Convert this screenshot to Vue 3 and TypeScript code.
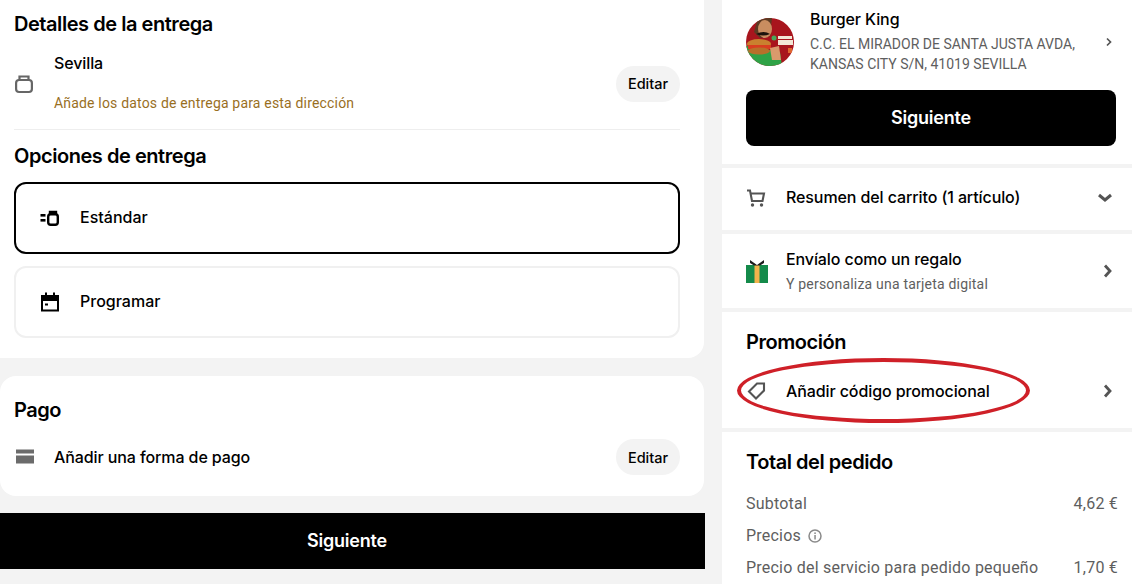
<script setup lang="ts">
const totals = [
  { label: 'Subtotal', value: '4,62 €', info: false },
  { label: 'Precios', value: '', info: true },
  { label: 'Precio del servicio para pedido pequeño', value: '1,70 €', info: false },
];
</script>

<template>
  <div class="page">
    <main class="left">
      <section class="card delivery">
        <h2 class="title">Detalles de la entrega</h2>
        <div class="address">
          <svg class="addr-icon" width="20" height="20" viewBox="0 0 20 20">
            <path d="M5.500 7V2.500h9V7" fill="none" stroke="#666" stroke-width="2.200" />
            <rect x="2.100" y="6" width="15.800" height="12" rx="3" fill="none" stroke="#666" stroke-width="2.200" />
          </svg>
          <div class="addr-text">
            <div class="addr-city">Sevilla</div>
            <div class="addr-warn">Añade los datos de entrega para esta dirección</div>
          </div>
          <button class="edit">Editar</button>
        </div>
        <div class="rule"></div>
        <h2 class="title options">Opciones de entrega</h2>
        <div class="option selected">
          <svg width="20" height="20" viewBox="0 0 20 20">
            <rect x="0.500" y="6" width="5" height="2.600" fill="#000" />
            <rect x="0.500" y="11" width="5" height="2.600" fill="#000" />
            <path d="M10 6V4h6v2" fill="none" stroke="#000" stroke-width="2.400" />
            <rect x="8.200" y="6.200" width="9.600" height="10.600" rx="2.500" fill="none" stroke="#000" stroke-width="2.400" />
          </svg>
          <span class="option-label">Estándar</span>
        </div>
        <div class="option">
          <svg width="20" height="20" viewBox="0 0 20 20">
            <path d="M1 3h4V0.500h2V3h6V0.500h2V3h4v16.500H1V3Zm2 6v8.500h14V9H3Z" fill="#000" />
            <rect x="5" y="11.500" width="3" height="2" fill="#000" />
          </svg>
          <span class="option-label">Programar</span>
        </div>
      </section>

      <section class="card payment">
        <h2 class="title">Pago</h2>
        <div class="pay-row">
          <svg class="addr-icon" width="20" height="20" viewBox="0 0 20 20">
            <rect x="2" y="2.500" width="18" height="4" fill="#6b6b6b" />
            <rect x="2" y="8.500" width="18" height="8" fill="#6b6b6b" />
          </svg>
          <span class="pay-label">Añadir una forma de pago</span>
          <button class="edit">Editar</button>
        </div>
      </section>

      <button class="next wide">Siguiente</button>
    </main>

    <aside class="right">
      <section class="panel store">
        <div class="store-row">
          <svg class="logo" width="48" height="48" viewBox="0 0 48 48">
            <defs>
              <clipPath id="logo-clip"><circle cx="24" cy="24" r="24" /></clipPath>
            </defs>
            <g clip-path="url(#logo-clip)">
              <rect width="48" height="48" fill="#a8151d" />
              <path d="M0 28 L14 30 L34 34 L36 48 H0Z" fill="#2fa347" />
              <path d="M12 0 H26 L24 18 L14 20 L8 14Z" fill="#5c3a22" />
              <ellipse cx="19" cy="11" rx="7" ry="9" fill="#c98d60" />
              <path d="M10 16 q8 -4 14 0 q-7 3 -14 0Z" fill="#1c120c" />
              <ellipse cx="13" cy="26" rx="12" ry="5" fill="#c9802f" />
              <rect x="2" y="27" width="23" height="4" fill="#d93d20" />
              <ellipse cx="13" cy="33" rx="11" ry="3.500" fill="#b8702a" />
              <path d="M24 30 L33 28 L35 42 L26 42Z" fill="#d99a6c" />
              <circle cx="28" cy="20" r="2.500" fill="#49a85a" />
              <rect x="32" y="18" width="14" height="3" fill="#f3e7d6" />
              <rect x="32" y="22" width="15" height="5" fill="#f3e7d6" />
              <rect x="42" y="30" width="4" height="5" fill="#e0662e" />
            </g>
          </svg>
          <div class="store-text">
            <div class="store-name">Burger King</div>
            <div class="store-addr">C.C. EL MIRADOR DE SANTA JUSTA AVDA,<br />KANSAS CITY S/N, 41019 SEVILLA</div>
          </div>
          <svg class="store-chev" width="8" height="10" viewBox="0 0 8 10">
            <path d="M2 1.500 5.500 5 2 8.500" fill="none" stroke="#545454" stroke-width="1.700" />
          </svg>
        </div>
        <button class="next side">Siguiente</button>
      </section>

      <section class="panel cart">
        <svg width="20" height="20" viewBox="0 0 20 20">
          <path d="M1 2.500h3l2 10.500h10.500l1.500-7.500H4.600" fill="none" stroke="#545454" stroke-width="2.100" />
          <circle cx="6.500" cy="17" r="1.700" fill="#545454" />
          <circle cx="15.500" cy="17" r="1.700" fill="#545454" />
        </svg>
        <span class="row-label">Resumen del carrito (1 artículo)</span>
        <svg class="chev down" width="16" height="16" viewBox="0 0 16 16">
          <path d="M2 5l6 5 6-5" fill="none" stroke="#545454" stroke-width="3" />
        </svg>
      </section>

      <section class="panel gift">
        <svg width="22" height="24" viewBox="0 0 22 24">
          <rect x="0" y="6" width="22" height="18" fill="#148a4a" />
          <rect x="8.500" y="6" width="5" height="18" fill="#f2b34c" />
          <path d="M4 1l7 5 7-5v3l-4 2.500H8L4 4Z" fill="#1c1c1c" />
        </svg>
        <div class="gift-text">
          <div class="row-label">Envíalo como un regalo</div>
          <div class="gift-sub">Y personaliza una tarjeta digital</div>
        </div>
        <svg class="chev" width="16" height="16" viewBox="0 0 16 16">
          <path d="M5 2.500l5 5.500-5 5.500" fill="none" stroke="#545454" stroke-width="2.800" />
        </svg>
      </section>

      <section class="panel promo">
        <h2 class="title">Promoción</h2>
        <div class="promo-row">
          <svg width="20" height="20" viewBox="0 0 20 20">
            <path d="M11 2.500h7v7l-8 8-7-7Z" fill="none" stroke="#545454" stroke-width="2.100" />
          </svg>
          <span class="row-label">Añadir código promocional</span>
          <svg class="chev" width="16" height="16" viewBox="0 0 16 16">
            <path d="M5 2.500l5 5.500-5 5.500" fill="none" stroke="#545454" stroke-width="2.800" />
          </svg>
          <div class="circle-mark"></div>
        </div>
      </section>

      <section class="panel total">
        <h2 class="title">Total del pedido</h2>
        <div v-for="row in totals" :key="row.label" class="total-row">
          <span class="total-label">
            {{ row.label }}
            <svg v-if="row.info" class="info" width="14" height="14" viewBox="0 0 14 14">
              <circle cx="7" cy="7" r="6" fill="none" stroke="#8a8a8a" stroke-width="1.500" />
              <rect x="6.300" y="6" width="1.500" height="4.500" fill="#8a8a8a" />
              <rect x="6.300" y="3.400" width="1.500" height="1.600" fill="#8a8a8a" />
            </svg>
          </span>
          <span>{{ row.value }}</span>
        </div>
      </section>
    </aside>
  </div>
</template>

<style>
html,
body {
  margin: 0;
  background: #f3f3f3;
}
</style>

<style scoped>
.page {
  display: flex;
  width: 1132px;
  height: 584px;
  overflow: hidden;
  background: #f3f3f3;
  font-family: Inter, "Liberation Sans", sans-serif;
  color: #000;
  font-size: 16px;
  letter-spacing: -0.1px;
}
.left {
  width: 705px;
  flex-shrink: 0;
  margin-right: 17px;
}
.card {
  width: 704px;
  box-sizing: border-box;
  background: #fff;
  padding: 0 24px 0 14px;
}
.delivery {
  height: 358px;
  padding-top: 10px;
  border-radius: 0 0 16px 0;
}
.payment {
  height: 120px;
  margin-top: 18px;
  padding-top: 20px;
  border-radius: 16px;
}
.title {
  margin: 0;
  font-size: 20px;
  line-height: 28px;
  font-weight: 600;
  letter-spacing: -0.45px;
}
.address {
  display: flex;
  align-items: center;
  margin-top: 16px;
}
.addr-icon {
  flex-shrink: 0;
  margin-right: 20px;
}
.addr-text {
  flex: 1;
}
.addr-city {
  line-height: 18px;
  padding-bottom: 2px;
  font-weight: 500;
}
.addr-warn {
  margin-top: 19px;
  font-family: Roboto, sans-serif;
  font-size: 14px;
  line-height: 20px;
  letter-spacing: 0.18px;
  color: #996f1f;
}
.edit {
  width: 64px;
  height: 36px;
  border: 0;
  border-radius: 18px;
  background: #f3f3f3;
  color: #000;
  font: 500 14.500px Inter, "Liberation Sans", sans-serif;
  padding: 0;
}
.rule {
  height: 1px;
  background: #eeeeee;
  margin-top: 16px;
}
.options {
  margin-top: 12px;
}
.option {
  display: flex;
  align-items: center;
  gap: 20px;
  height: 72px;
  box-sizing: border-box;
  margin-top: 12px;
  padding-left: 24px;
  border: 2px solid #f0f0f0;
  border-radius: 12px;
  font-weight: 500;
  letter-spacing: 0;
}
.option-label {
  padding-bottom: 2px;
}
.selected {
  border-color: #000;
}
.pay-row {
  display: flex;
  align-items: center;
  margin-top: 15px;
}
.pay-label {
  flex: 1;
  font-weight: 500;
}
.next {
  display: block;
  border: 0;
  background: #000;
  color: #fff;
  font: 600 18px Inter, "Liberation Sans", sans-serif;
  letter-spacing: -0.2px;
  padding: 0 0 2px;
}
.wide {
  width: 705px;
  height: 56px;
  margin-top: 17px;
  padding-right: 11px;
}
.right {
  flex: 1;
  display: flex;
  flex-direction: column;
  gap: 4px;
}
.panel {
  background: #fff;
  padding: 0 19px 0 24px;
  box-sizing: border-box;
}
.store {
  height: 164px;
  padding-top: 10px;
}
.store-row {
  display: flex;
  align-items: center;
  height: 64px;
}
.logo {
  flex-shrink: 0;
  margin-right: 16px;
}
.store-text {
  flex: 1;
}
.store-name {
  font-weight: 500;
  line-height: 18px;
  padding-bottom: 2px;
}
.store-addr {
  margin-top: 4px;
  font-family: Roboto, sans-serif;
  font-size: 14px;
  line-height: 20px;
  letter-spacing: 0;
  color: #5e5e5e;
}
.store-chev {
  margin-right: 3px;
}
.side {
  width: 370px;
  height: 56px;
  margin-top: 16px;
  border-radius: 8px;
}
.cart,
.gift,
.promo-row {
  display: flex;
  align-items: center;
  gap: 20px;
}
.cart {
  height: 62px;
  padding-bottom: 2px;
}
.cart .row-label {
  padding-bottom: 2px;
}
.gift {
  height: 74px;
  gap: 18px;
}
.row-label {
  flex: 1;
  font-weight: 500;
  line-height: 20px;
}
.gift-text {
  flex: 1;
}
.gift-sub {
  margin-top: 5px;
  font-family: Roboto, sans-serif;
  font-size: 14px;
  line-height: 20px;
  letter-spacing: 0.2px;
  color: #5e5e5e;
}
.chev {
  flex-shrink: 0;
}
.down {
  margin-right: 3px;
}
.promo {
  height: 116px;
  padding-top: 16px;
}
.promo-row {
  position: relative;
  height: 44px;
  margin-top: 13px;
}
.circle-mark {
  position: absolute;
  left: -9px;
  top: -11px;
  width: 293px;
  height: 65px;
  box-sizing: border-box;
  border: 4px solid #cf2028;
  border-radius: 50%;
}
.total {
  flex: 1;
  padding-top: 16px;
  padding-right: 16px;
}
.total-row {
  display: flex;
  justify-content: space-between;
  height: 32px;
  line-height: 32px;
  font-family: Roboto, sans-serif;
  letter-spacing: 0.22px;
  color: #5e5e5e;
}
.total-row > span:last-child {
  margin-right: 1px;
}
.total-row:first-of-type {
  margin-top: 12px;
}
.total-label {
  display: inline-flex;
  align-items: center;
  gap: 7px;
}
</style>
